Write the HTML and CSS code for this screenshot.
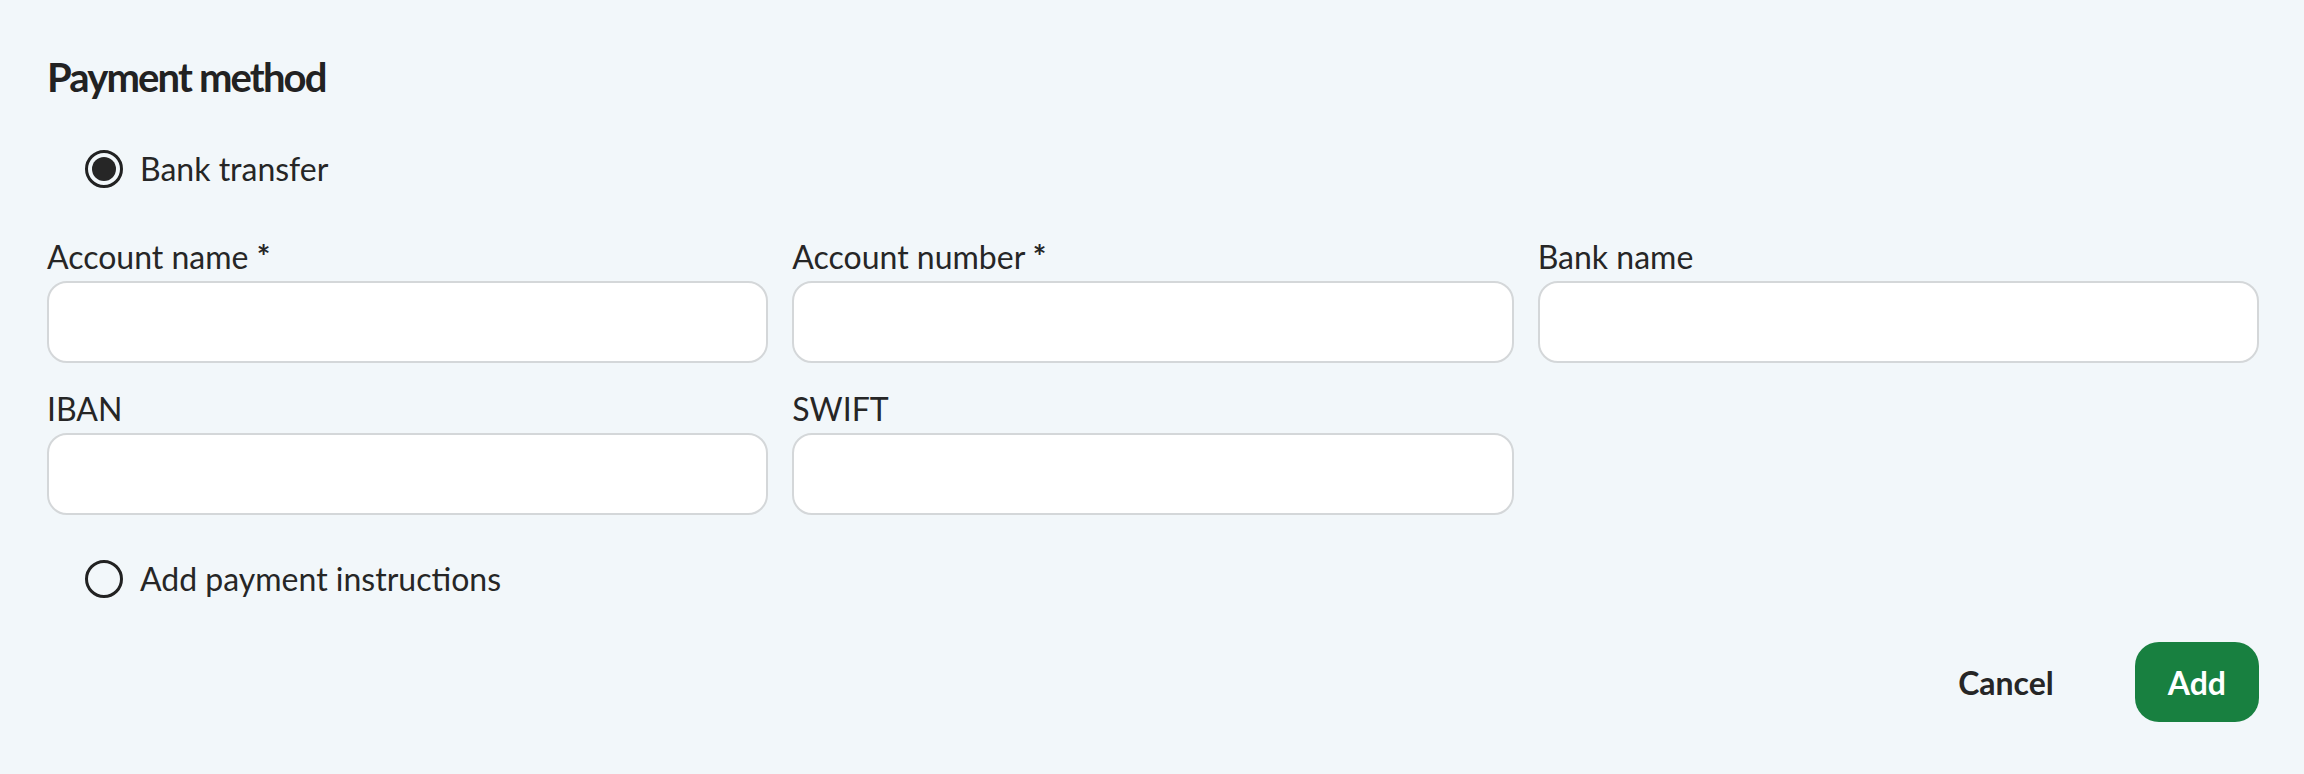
FILE: index.html
```html
<!DOCTYPE html>
<html lang="en">
<head>
<meta charset="utf-8">
<title>Payment method</title>
<link rel="stylesheet" href="styles.css">
</head>
<body>
<div class="page">
  <h2 class="title">Payment method</h2>
  <label class="radio">
    <span class="radio-circle checked"><span class="radio-dot"></span></span>
    <span class="radio-label">Bank transfer</span>
  </label>
  <div class="fields">
    <div class="field">
      <label class="field-label">Account name <span class="req">*</span></label>
      <input class="field-input" type="text">
    </div>
    <div class="field">
      <label class="field-label">Account number <span class="req">*</span></label>
      <input class="field-input" type="text">
    </div>
    <div class="field">
      <label class="field-label">Bank name</label>
      <input class="field-input" type="text">
    </div>
    <div class="field">
      <label class="field-label">IBAN</label>
      <input class="field-input" type="text">
    </div>
    <div class="field">
      <label class="field-label">SWIFT</label>
      <input class="field-input" type="text">
    </div>
  </div>
  <label class="radio radio-second">
    <span class="radio-circle"></span>
    <span class="radio-label">Add payment instructions</span>
  </label>
  <div class="actions">
    <button class="btn btn-text" type="button">Cancel</button>
    <button class="btn btn-primary" type="button">Add</button>
  </div>
</div>
</body>
</html>
```
FILE: styles.css
```css
html, body {
  margin: 0;
  padding: 0;
  background: #f2f7fa;
}
body {
  font-family: Lato, "Noto Sans", sans-serif;
  color: #262626;
}
.page {
  padding: 53px 45px 0 47px;
}
.title {
  margin: 0 0 44px 0;
  font-size: 40px;
  line-height: 48px;
  font-weight: 700;
  letter-spacing: -1.85px;
  color: #222222;
}
.radio {
  display: flex;
  align-items: center;
  gap: 17px;
  margin-left: 38px;
  height: 48px;
  font-size: 32px;
  line-height: 48px;
  cursor: pointer;
}
.radio-circle {
  width: 38px;
  height: 38px;
  box-sizing: border-box;
  border: 3px solid #222222;
  border-radius: 50%;
  display: flex;
  align-items: center;
  justify-content: center;
  flex: none;
}
.radio-dot {
  width: 24px;
  height: 24px;
  border-radius: 50%;
  background: #262626;
}
.fields {
  margin-top: 40px;
  display: grid;
  grid-template-columns: repeat(3, 1fr);
  column-gap: 24px;
  row-gap: 22px;
}
.field-label {
  display: block;
  font-size: 32px;
  line-height: 48px;
  color: #262626;
}
.req {
  font-weight: 700;
}
.field-input {
  display: block;
  width: 100%;
  height: 82px;
  box-sizing: border-box;
  margin: 0;
  border: 2px solid #d4d7d9;
  border-radius: 20px;
  background: #ffffff;
  font-family: inherit;
  font-size: 32px;
  padding: 0 20px;
  outline: none;
}
.radio-second {
  margin-top: 40px;
}
.actions {
  margin-top: 39px;
  display: flex;
  justify-content: flex-end;
  gap: 48px;
}
.btn {
  height: 80px;
  padding: 0 33px;
  border: none;
  border-radius: 24px;
  font-family: inherit;
  font-size: 32px;
  font-weight: 700;
  cursor: pointer;
}
.btn-text {
  background: transparent;
  color: #262626;
}
.btn-primary {
  background: #188040;
  color: #ffffff;
}
```
